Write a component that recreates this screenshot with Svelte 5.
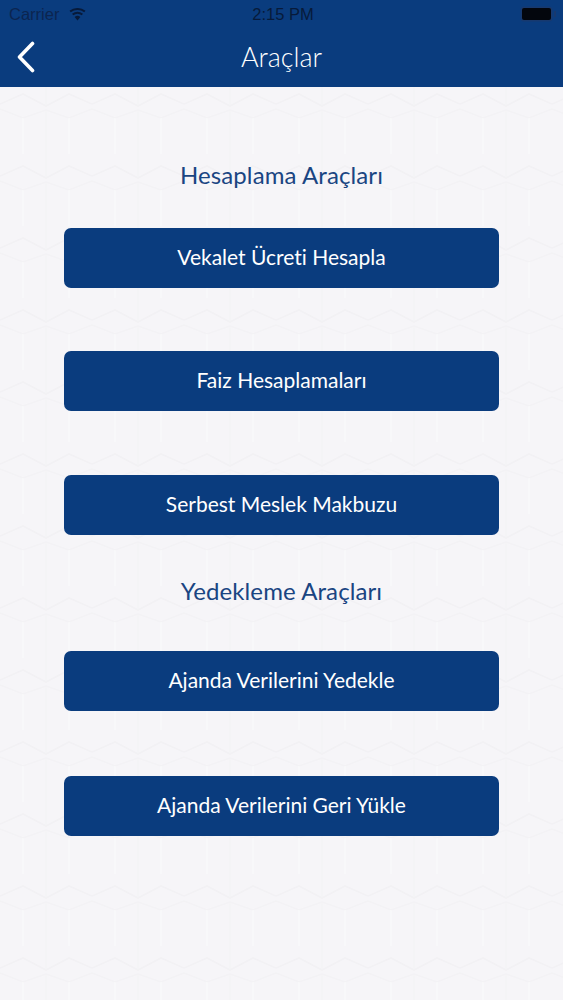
<script lang="ts">
const hesaplama = [
  { label: "Vekalet Ücreti Hesapla", gap: 0 },
  { label: "Faiz Hesaplamaları", gap: 63 },
  { label: "Serbest Meslek Makbuzu", gap: 64 },
];
const yedekleme = [
  { label: "Ajanda Verilerini Yedekle", gap: 0 },
  { label: "Ajanda Verilerini Geri Yükle", gap: 65 },
];
</script>

<div class="screen">
  <!-- faint wallpaper behind the page -->
  <svg class="wallpaper" width="563" height="1000" aria-hidden="true">
    <defs>
      <pattern id="mesh" width="92" height="72" patternUnits="userSpaceOnUse" y="10">
        <path d="M0 22 L23 12 L46 24 L69 12 L92 22" fill="none" stroke="#f2f1f4" stroke-width="1.6" />
        <path d="M0 27 L23 36 L46 28 L69 36 L92 27" fill="none" stroke="#f3f2f5" stroke-width="1.4" />
        <path d="M23 36 V84 M69 36 V84" fill="none" stroke="#f9f9fa" stroke-width="1.6" />
        <path d="M46 0 V24 M46 28 V72" fill="none" stroke="#f3f3f5" stroke-width="1.2" />
      </pattern>
    </defs>
    <rect width="563" height="1000" fill="url(#mesh)" />
  </svg>

  <header class="top">
    <div class="status">
      <div class="status-left">
        <span>Carrier</span>
        <svg class="wifi" width="19" height="13" viewBox="0 0 20 14" aria-hidden="true">
          <path d="M10 13.5 L6.9 9.7 A5 5 0 0 1 13.1 9.7 Z" fill="#071a3a" />
          <path d="M5.4 7.9 A7.6 7.6 0 0 1 14.6 7.9 L15.9 6.3 A9.8 9.8 0 0 0 4.1 6.3 Z" fill="#071a3a" />
          <path d="M2.8 4.7 A11.6 11.6 0 0 1 17.2 4.7 L18.6 3 A13.8 13.8 0 0 0 1.4 3 Z" fill="#071a3a" />
        </svg>
      </div>
      <span class="clock">2:15 PM</span>
      <div class="battery" aria-hidden="true"></div>
    </div>
    <div class="nav">
      <button class="back" aria-label="Geri">
        <svg width="20" height="32" viewBox="0 0 20 32">
          <path d="M16.5 2.5 L3.5 16 L16.5 29.5" fill="none" stroke="#fff" stroke-width="3.6" stroke-linecap="round" stroke-linejoin="round" />
        </svg>
      </button>
      <span class="title">Araçlar</span>
    </div>
  </header>

  <main class="content">
    <h2 class="first">Hesaplama Araçları</h2>
    <div class="list">
      {#each hesaplama as item}
        <button class="tool" style="margin-top: {item.gap}px">{item.label}</button>
      {/each}
    </div>
    <h2 class="second">Yedekleme Araçları</h2>
    <div class="list">
      {#each yedekleme as item}
        <button class="tool" style="margin-top: {item.gap}px">{item.label}</button>
      {/each}
    </div>
  </main>
</div>

<style>
  :global(body) {
    margin: 0;
    background: #f6f5f8;
  }
  .screen {
    position: relative;
    height: 1000px;
    overflow: hidden;
    font-family: Lato, "Open Sans", sans-serif;
    font-variant-ligatures: none;
    background: #f6f5f8;
  }
  .wallpaper {
    position: absolute;
    left: 0;
    top: 0;
  }
  .top {
    position: relative;
    height: 87px;
    background: #0a3c7e;
    box-sizing: border-box;
  }
  .status {
    height: 28px;
    display: grid;
    grid-template-columns: 1fr auto 1fr;
    align-items: center;
    padding: 0 12px 0 9px;
    font-family: "Liberation Sans", Arial, sans-serif;
    font-size: 16.5px;
  }
  .status-left {
    display: flex;
    align-items: center;
    gap: 9px;
    color: #0c2550;
  }
  .clock {
    margin-left: 6px;
    color: #071a3a;
  }
  .battery {
    position: relative;
    justify-self: end;
    width: 29px;
    height: 12px;
    background: #03060d;
    border-radius: 2px;
    box-shadow: 0 0 0 1.5px #17396f;
  }
  .battery::after {
    content: "";
    position: absolute;
    right: -5px;
    top: 3px;
    width: 2px;
    height: 6px;
    background: #17396f;
  }
  .nav {
    height: 59px;
    position: relative;
    display: flex;
    align-items: center;
    justify-content: center;
    padding-bottom: 3px;
    box-sizing: border-box;
  }
  .back {
    position: absolute;
    left: 16px;
    top: 13px;
    padding: 0;
    border: 0;
    background: none;
    line-height: 0;
  }
  .title {
    color: #fff;
    font-size: 27px;
    font-weight: 300;
  }
  .content {
    position: relative;
    padding: 72px 64px 0;
  }
  h2 {
    margin: 0;
    height: 31px;
    line-height: 31px;
    text-align: center;
    color: #1a4582;
    font-size: 24px;
    font-weight: 400;
    letter-spacing: 0.1px;
  }
  .second {
    margin-top: 40px;
  }
  .list {
    margin-top: 38px;
    display: flex;
    flex-direction: column;
  }
  .second + .list {
    margin-top: 45px;
  }
  .tool {
    height: 60px;
    border: 0;
    border-radius: 7px;
    background: #0a3c7e;
    color: #fff;
    font: inherit;
    font-size: 21px;
    padding: 0 0 4px;
  }
</style>
